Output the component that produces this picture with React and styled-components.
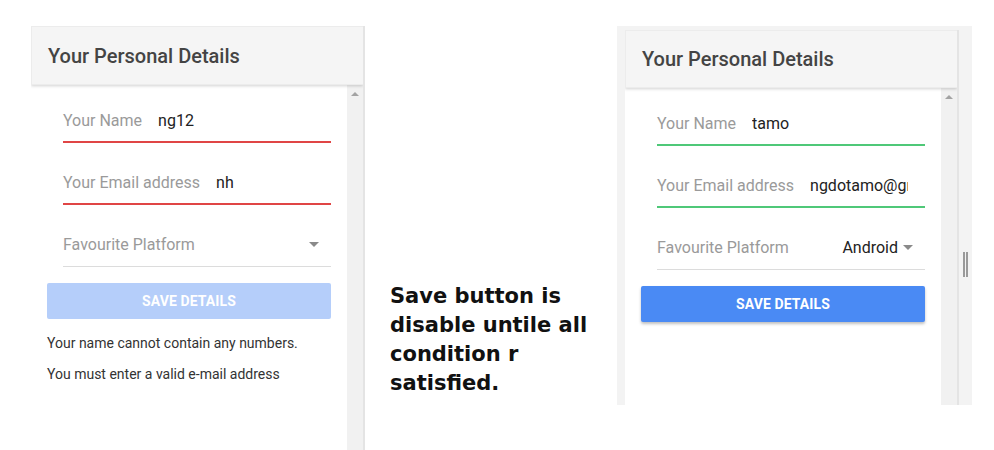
import React from 'react'
import styled, { createGlobalStyle } from 'styled-components'

const GlobalStyle = createGlobalStyle`
  body {
    margin: 0;
    background: #fff;
    font-family: Roboto, "Liberation Sans", sans-serif;
    overflow: hidden;
  }
`

const Page = styled.div`
  width: 994px;
  height: 450px;
  display: flex;
  align-items: flex-start;
  padding: 26px 0 0 31px;
  box-sizing: border-box;
  overflow: hidden;
`

const Frame = styled.div`
  display: flex;
  align-items: flex-start;
  background: #f3f3f3;
  padding: 4px 0 0 8px;
  height: 379px;
  box-sizing: border-box;
  overflow: hidden;
`

const Handle = styled.div`
  width: 13px;
  height: 100%;
  display: flex;
  justify-content: center;
  padding-top: 222px;
  box-sizing: border-box;
  & > span {
    width: 5px;
    height: 25px;
    border-left: 2px solid #9a9a9a;
    border-right: 2px solid #9a9a9a;
    box-sizing: border-box;
  }
`

const Screen = styled.div`
  width: 334px;
  height: ${props => props.height}px;
  display: flex;
  flex-direction: column;
  background: #fff;
  border-right: 2px solid #e4e4e4;
  box-sizing: border-box;
  overflow: hidden;
  flex-shrink: 0;
`

const Header = styled.div`
  height: ${props => props.height}px;
  display: flex;
  align-items: center;
  padding-left: 16px;
  background: #f5f5f5;
  border: 1px solid #ececec;
  border-right: none;
  box-shadow: 0 1px 3px rgba(0, 0, 0, 0.18);
  position: relative;
  z-index: 1;
  font-size: 20px;
  font-weight: 500;
  color: #444;
  flex-shrink: 0;
`

const Body = styled.div`
  flex: 1;
  display: flex;
  min-width: 0;
`

const Content = styled.div`
  flex: 1;
  min-width: 0;
  padding: 14px 16px 0 16px;
`

const Track = styled.div`
  width: 16px;
  flex-shrink: 0;
  background: #f1f1f1;
  display: flex;
  justify-content: center;
  padding-top: 7px;
  box-sizing: border-box;
  & > span {
    width: 0;
    height: 0;
    border-left: 4px solid transparent;
    border-right: 4px solid transparent;
    border-bottom: 4px solid #a3a3a3;
  }
`

const lineColors = {
  error: '#e04545',
  valid: '#4fc878',
  idle: '#dcdcdc'
}

const Field = styled.div`
  height: 44px;
  margin: 0 0 18px 16px;
  display: flex;
  align-items: center;
  box-sizing: border-box;
  border-bottom: ${props => props.state === 'idle' ? 1 : 2}px solid ${props => lineColors[props.state]};
  font-size: 16px;
`

const Label = styled.span`
  color: #9a9a9a;
  white-space: nowrap;
  flex-shrink: 0;
`

const Value = styled.span`
  flex: 1;
  min-width: 0;
  margin: 0 17px 0 16px;
  color: #222;
  white-space: nowrap;
  overflow: hidden;
`

const Select = styled.span`
  margin-left: auto;
  display: flex;
  align-items: center;
  gap: 5px;
  margin-right: 12px;
  color: #222;
  white-space: nowrap;
  &::after {
    content: '';
    border-left: 5px solid transparent;
    border-right: 5px solid transparent;
    border-top: 5px solid #8a8a8a;
  }
`

const SaveButton = styled.button`
  width: 100%;
  height: 36px;
  margin-top: -2px;
  border: none;
  border-radius: 2px;
  background: ${props => props.disabled ? '#b5cefa' : '#4a8af4'};
  box-shadow: ${props => props.disabled ? 'none' : '0 2px 3px rgba(0,0,0,0.25)'};
  color: #fff;
  font-family: Roboto, "Liberation Sans", sans-serif;
  font-size: 14px;
  font-weight: 700;
  letter-spacing: 0.1px;
`

const ErrorText = styled.p`
  margin: 14px 0 0;
  font-size: 14px;
  line-height: 20px;
  color: #333;
  & + & {
    margin-top: 11px;
  }
`

const Note = styled.div`
  width: 227px;
  margin: 256px 0 0 25px;
  font-family: "DejaVu Sans", sans-serif;
  font-weight: 700;
  font-size: 21px;
  line-height: 29px;
  color: #111;
  flex-shrink: 0;
`

const DetailsForm = ({ height, headerHeight, name, email, platform, valid }) => (
    <Screen height={height}>
        <Header height={headerHeight}>Your Personal Details</Header>
        <Body>
            <Content>
                <Field state={valid ? 'valid' : 'error'}>
                    <Label>Your Name</Label>
                    <Value>{name}</Value>
                </Field>
                <Field state={valid ? 'valid' : 'error'}>
                    <Label>Your Email address</Label>
                    <Value>{email}</Value>
                </Field>
                <Field state='idle'>
                    <Label>Favourite Platform</Label>
                    <Select>{platform}</Select>
                </Field>
                <SaveButton disabled={!valid}>SAVE DETAILS</SaveButton>
                {!valid && (
                    <>
                        <ErrorText>Your name cannot contain any numbers.</ErrorText>
                        <ErrorText>You must enter a valid e-mail address</ErrorText>
                    </>
                )}
            </Content>
            <Track><span /></Track>
        </Body>
    </Screen>
)

const App = () => (
    <Page>
        <GlobalStyle />
        <DetailsForm height={424} headerHeight={57} name='ng12' email='nh' platform='' valid={false} />
        <Note>
            Save button is disable untile all condition r satisfied.
        </Note>
        <Frame>
            <DetailsForm height={375} headerHeight={56} name='tamo' email='ngdotamo@gmail.com' platform='Android' valid />
            <Handle><span /></Handle>
        </Frame>
    </Page>
)

export default App
